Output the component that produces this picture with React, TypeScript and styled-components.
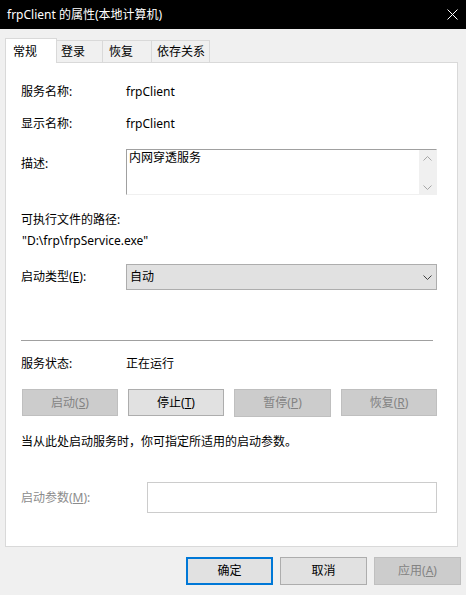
import React from 'react';
import styled, {createGlobalStyle} from 'styled-components';

const GlobalStyle = createGlobalStyle`
    html, body {
        margin: 0;
        padding: 0;
        background: #f0f0f0;
    }
    * {
        box-sizing: border-box;
    }
`;

const font = `"Segoe UI", "Noto Sans", "Noto Sans CJK SC", sans-serif`;

const Window = styled.div`
    width: 466px;
    height: 595px;
    display: flex;
    flex-direction: column;
    background: #f0f0f0;
    font-family: ${font};
    font-size: 12px;
    line-height: 16px;
    color: #000;
    overflow: hidden;
`;

const TitleBar = styled.div`
    height: 29px;
    flex: none;
    display: flex;
    align-items: center;
    justify-content: space-between;
    background: #000;
    color: #fff;
    padding: 0 8px 0 7px;
    font-size: 12px;
`;

const Body = styled.div`
    padding: 9px 8px 0 5px;
`;

const TabStrip = styled.div`
    display: flex;
    align-items: flex-end;
    height: 24px;
`;

interface ITabProps {
    readonly active?: boolean;
    readonly width: number;
    readonly pad: number;
}

const Tab = styled.div<ITabProps>`
    width: ${p => p.width}px;
    height: ${p => p.active ? 25 : 22}px;
    margin-bottom: ${p => p.active ? -1 : 0}px;
    margin-left: ${p => p.active ? 0 : -1}px;
    position: relative;
    z-index: ${p => p.active ? 1 : 0};
    padding: ${p => p.active ? 5 : 3}px 0 0 ${p => p.pad}px;
    background: ${p => p.active ? '#fff' : '#f0f0f0'};
    border: 1px solid #d9d9d9;
    border-bottom: none;
    white-space: nowrap;
`;

const Panel = styled.div`
    height: 485px;
    background: #fff;
    border: 1px solid #d9d9d9;
    padding: 0 20px 0 15px;
    display: flex;
    flex-direction: column;
`;

interface IRowProps {
    readonly top: number;
    readonly height?: number;
    readonly align?: string;
    readonly indent?: number;
}

const Row = styled.div<IRowProps>`
    margin-top: ${p => p.top}px;
    display: flex;
    align-items: ${p => p.align || 'center'};
    ${p => p.height ? `height: ${p.height}px;` : ''}
`;

interface ILabelProps {
    readonly width?: number;
    readonly disabled?: boolean;
    readonly padTop?: number;
}

const Label = styled.div<ILabelProps>`
    width: ${p => p.width || 105}px;
    flex: none;
    color: ${p => p.disabled ? '#8c8c8c' : '#000'};
    ${p => p.padTop ? `padding-top: ${p.padTop}px;` : ''}
`;

const Text = styled.div<IRowProps>`
    margin-top: ${p => p.top}px;
    padding-left: ${p => p.indent || 0}px;
`;

const DescBox = styled.div`
    width: 312px;
    height: 46px;
    display: flex;
    border: 1px solid;
    border-color: #a0a0a0 #f0f0f0 #f0f0f0 #a0a0a0;
`;

const DescText = styled.div`
    flex: 1;
    padding: 0 0 0 2px;
`;

const ScrollBar = styled.div`
    width: 17px;
    background: #f0f0f0;
    display: flex;
    flex-direction: column;
    justify-content: space-between;
    align-items: center;
    padding: 6px 0 4px;
`;

const Combo = styled.div`
    width: 312px;
    height: 26px;
    background: #e1e1e1;
    border: 1px solid #adadad;
    display: flex;
    align-items: center;
    justify-content: space-between;
    padding: 0 4px 0 3px;
`;

const Separator = styled.div<IRowProps>`
    margin-top: ${p => p.top}px;
    margin-right: 4px;
    height: 1px;
    background: #a0a0a0;
`;

const ButtonRow = styled.div<IRowProps>`
    margin-top: ${p => p.top}px;
    margin-left: 1px;
    display: flex;
    justify-content: space-between;
`;

interface IButtonProps {
    readonly disabled?: boolean;
    readonly primary?: boolean;
    readonly width?: number;
}

const Button = styled.div<IButtonProps>`
    width: ${p => p.width || 96}px;
    height: ${p => p.width ? 28 : 27}px;
    display: flex;
    align-items: center;
    justify-content: center;
    background: ${p => p.disabled ? '#cccccc' : '#e1e1e1'};
    border: ${p => p.primary ? '2px solid #0078d7' : `1px solid ${p.disabled ? '#bfbfbf' : '#adadad'}`};
    color: ${p => p.disabled ? '#838383' : '#000'};
    white-space: nowrap;
`;

const ParamInput = styled.div`
    width: 291px;
    height: 31px;
    border: 1px solid #cccccc;
    background: #fff;
`;

const Footer = styled.div`
    display: flex;
    justify-content: flex-end;
    gap: 7px;
    padding: 10px 5px 0 0;
`;

const Chevron = ({up, color}: {up?: boolean; color: string}) => (
    <svg width="9" height="5" viewBox="0 0 9 5">
        <path d={up ? 'M0.5 4.5 L4.5 0.5 L8.5 4.5' : 'M0.5 0.5 L4.5 4.5 L8.5 0.5'} fill="none" stroke={color} strokeWidth="1" />
    </svg>
);

const CloseIcon = () => (
    <svg width="11" height="11" viewBox="0 0 11 11">
        <path d="M0.5 0.5 L10.5 10.5 M10.5 0.5 L0.5 10.5" stroke="#fff" strokeWidth="1" />
    </svg>
);

export default () => {
    return (
        <Window>
            <GlobalStyle />
            <TitleBar>
                <span>frpClient 的属性(本地计算机)</span>
                <CloseIcon />
            </TitleBar>
            <Body>
                <TabStrip>
                    <Tab active width={52} pad={7}>常规</Tab>
                    <Tab width={47} pad={4}>登录</Tab>
                    <Tab width={50} pad={6}>恢复</Tab>
                    <Tab width={59} pad={5}>依存关系</Tab>
                </TabStrip>
                <Panel>
                    <Row top={21}>
                        <Label>服务名称:</Label>
                        <span>frpClient</span>
                    </Row>
                    <Row top={16}>
                        <Label>显示名称:</Label>
                        <span>frpClient</span>
                    </Row>
                    <Row top={17} align="flex-start">
                        <Label padTop={7}>描述:</Label>
                        <DescBox>
                            <DescText>内网穿透服务</DescText>
                            <ScrollBar>
                                <Chevron up color="#a6a6a6" />
                                <Chevron color="#a6a6a6" />
                            </ScrollBar>
                        </DescBox>
                    </Row>
                    <Text top={17}>可执行文件的路径:</Text>
                    <Text top={5} indent={1}>"D:\frp\frpService.exe"</Text>
                    <Row top={15}>
                        <Label>启动类型(<u>E</u>):</Label>
                        <Combo>
                            <span>自动</span>
                            <Chevron color="#404040" />
                        </Combo>
                    </Row>
                    <Separator top={50} />
                    <Row top={15}>
                        <Label>服务状态:</Label>
                        <span>正在运行</span>
                    </Row>
                    <ButtonRow top={17}>
                        <Button disabled>启动(<u>S</u>)</Button>
                        <Button>停止(<u>T</u>)</Button>
                        <Button disabled width={97}>暂停(<u>P</u>)</Button>
                        <Button disabled>恢复(<u>R</u>)</Button>
                    </ButtonRow>
                    <Text top={17}>当从此处启动服务时，你可指定所适用的启动参数。</Text>
                    <Row top={32}>
                        <Label width={126} disabled>启动参数(<u>M</u>):</Label>
                        <ParamInput />
                    </Row>
                </Panel>
            </Body>
            <Footer>
                <Button primary width={87}>确定</Button>
                <Button width={87}>取消</Button>
                <Button disabled width={87}>应用(<u>A</u>)</Button>
            </Footer>
        </Window>
    );
};
